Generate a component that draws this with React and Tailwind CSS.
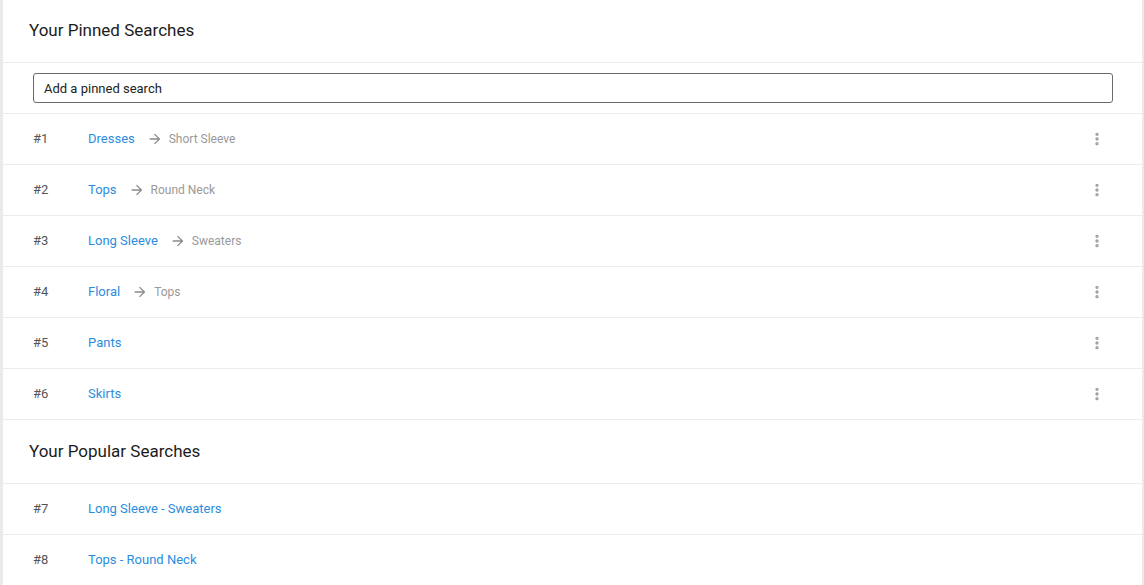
import { MoreVertical } from "lucide-react";

const pinned = [
  { rank: 1, term: "Dresses", sub: "Short Sleeve" },
  { rank: 2, term: "Tops", sub: "Round Neck" },
  { rank: 3, term: "Long Sleeve", sub: "Sweaters" },
  { rank: 4, term: "Floral", sub: "Tops" },
  { rank: 5, term: "Pants" },
  { rank: 6, term: "Skirts" },
];

const popular = [
  { rank: 7, term: "Long Sleeve - Sweaters" },
  { rank: 8, term: "Tops - Round Neck" },
];

function Arrow() {
  return (
    <svg className="w-[16px] h-[16px] text-[#8a8a8a]" viewBox="0 0 24 24" fill="currentColor">
      <path d="M12 4l-1.41 1.41L16.17 11H4v2h12.17l-5.58 5.59L12 20l8-8z" />
    </svg>
  );
}

function Row({ item, menu }) {
  return (
    <div className="flex items-center h-[51px] border-b border-[#ebebeb] pl-[30px] pr-[37px]">
      <span className="w-[55px] text-[13px] text-[#555]">#{item.rank}</span>
      <span className="text-[13px] text-[#2b8de0]">{item.term}</span>
      {item.sub && (
        <span className="flex items-center ml-[12px] gap-[6px]">
          <Arrow />
          <span className="text-[12px] text-[#999]">{item.sub}</span>
        </span>
      )}
      {menu && (
        <button className="ml-auto text-[#9e9e9e]">
          <MoreVertical size={16} strokeWidth={3} />
        </button>
      )}
    </div>
  );
}

export default function App() {
  return (
    <div className="min-h-[585px] bg-[#e9eaec] pl-[3px] pr-[2px]" style={{ fontFamily: "Roboto, 'Noto Sans', sans-serif" }}>
      <div className="bg-white min-h-[585px]">
        {/* Pinned */}
        <div className="h-[63px] flex items-center pl-[26px] border-b border-[#ebebeb]">
          <h2 className="text-[17px] text-[#1c1c1c]">Your Pinned Searches</h2>
        </div>
        <div className="h-[51px] flex items-center pl-[30px] pr-[29px] border-b border-[#ebebeb]">
          <input
            placeholder="Add a pinned search"
            className="w-full h-[30px] border border-[#6b6b6b] rounded-[3px] px-[10px] text-[13px] placeholder:text-[#222] outline-none"
          />
        </div>
        {pinned.map((p) => (
          <Row key={p.rank} item={p} menu />
        ))}

        {/* Popular */}
        <div className="h-[64px] flex items-center pl-[26px] border-b border-[#ebebeb]">
          <h2 className="text-[17px] text-[#1c1c1c]">Your Popular Searches</h2>
        </div>
        {popular.map((p) => (
          <Row key={p.rank} item={p} />
        ))}
      </div>
    </div>
  );
}
